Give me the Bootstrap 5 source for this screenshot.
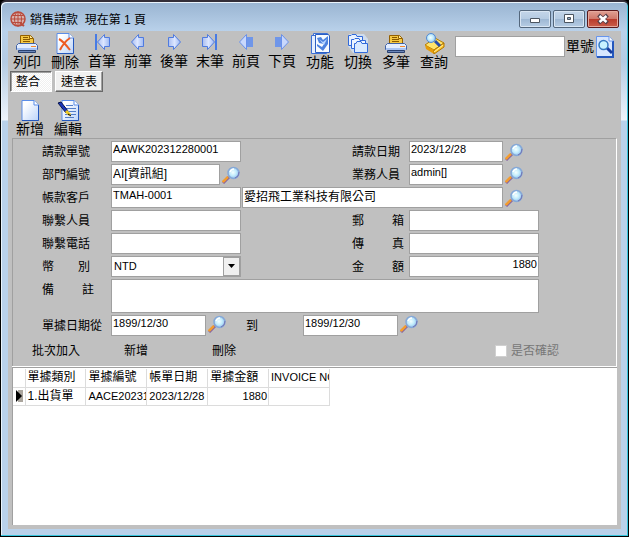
<!DOCTYPE html>
<html lang="zh-Hant">
<head>
<meta charset="utf-8">
<meta name="viewport" content="width=device-width, initial-scale=1">
<title>銷售請款</title>
<link href="https://cdn.jsdelivr.net/npm/bootstrap@5.3.0/dist/css/bootstrap.min.css" rel="stylesheet">
<style>
body{font-family:"Liberation Sans","Noto Sans CJK TC",sans-serif;font-size:12px;line-height:14px;color:#000;background:#000}
button{color:#000;line-height:14px}
.win{min-height:100vh;border:1px solid #000;border-top:2px solid #332e38;border-radius:6px 6px 0 0;padding:0 6px 7px;
 box-shadow:inset -1px -1px 0 #36c5dd,inset 1px 1px 0 #e9f3fb;
 background:linear-gradient(#99b4d1 0,#b9d1ea 29px,#b4cbe3 60px,#eef4fb 118px,#b9d1ea 119px)}
.titlebar{height:29px;padding:8px 3px 0 3px}
.titletext{line-height:16px;padding-left:4px;padding-top:2px;white-space:pre}
.capbtns{gap:2px}
.capbtn{width:32px;height:18px;border:1px solid #54677c;border-radius:2px;background:linear-gradient(#c4d6e9 0,#b5cbe2 48%,#9db7d3 50%,#b7cde4);box-shadow:inset 0 0 0 1px #d9e6f3}
.capclose{border-color:#5b1a1c;background:linear-gradient(#e0a093 0,#d0796b 48%,#b83a2a 50%,#ca5e4b);box-shadow:inset 0 0 0 1px #e5a99d}
.client{background:#c0c0c0;margin:0 1px;padding:0 4px 4px}
.tools{margin:0 -4px;height:40px}
.tool{display:flex;flex-direction:column;align-items:center;width:38px;font-size:14px;border:0;background:transparent;white-space:nowrap;padding:2px 0 0}
.nav-tool{width:36px}
.tool svg{width:22px;height:21px;margin-bottom:1px}
.nav-tool svg{height:18px;margin-bottom:3px}
.moretools{padding-left:1px}
.findbox{padding-top:5px;padding-right:7px}
.findbox label{font-size:14px;line-height:20px;padding:0 2px 0 1px}
.findfield{width:110px;flex:0 1 110px}
.field{border:1px solid #a0a0a0;background:#fff;height:21px;min-width:0;border-radius:0;padding:0 1px 5px;font-size:11px;line-height:14px;color:#000}
.cjk{font-size:12px}
.tabs{margin-left:-2px;gap:3px}
.tabbtn{height:21px;font-size:12px;padding:0 5px;background:#f0f0f0;border:1px solid;border-color:#fff #696969 #696969 #fff;box-shadow:inset -1px -1px 0 #a0a0a0}
.tabbtn.on{background:repeating-conic-gradient(#fff 0 25%,#f0f0f0 0 50%) 0 0/2px 2px;border-color:#696969 #fff #fff #696969;box-shadow:inset 1px 1px 0 #a0a0a0;padding-right:11px}
.edits{padding:6px 0 2px;margin-left:-1px}
.panel-form{border:1px solid;border-color:#a0a0a0 #fff #fff #a0a0a0;border-bottom:0;padding:2px 77px 0 29px}
.formgrid{display:grid;grid-template-columns:69px minmax(0,131fr) minmax(0,110fr) 57px minmax(0,130fr);row-gap:2px}
.lbl{align-self:center;line-height:19px;padding-top:2px;white-space:nowrap}
.label2{grid-column:4}
.spread{display:flex;justify-content:space-between;width:52px}
.spread.short{width:48px}
.left{grid-column:2;margin-right:1px}
.right{grid-column:5}
.wide{grid-column:3/6}
.whole{grid-column:2/-1}
.lens{border:0;background:transparent;padding:0 0 0 2px;width:36px;flex:none;text-align:left}
.lens svg{width:18px;height:18px;display:block}
.left .lens{width:21px}
.combo{appearance:none;padding:1px 20px 2px 2px}
.comboarrow{position:absolute;right:1px;top:1px;width:17px;height:19px;background:#f0f0f0;border:1px solid #a0a0a0;pointer-events:none}
.comboarrow svg{display:block;margin:6px 4px}
.memo{height:34px;resize:none;display:block}
.dates{display:grid;grid-template-columns:minmax(0,95fr) 97fr minmax(0,95fr) 141fr}
.acts{padding:8px 57px 8px 19px;border-left:1px solid #a0a0a0;border-right:1px solid #fff}
.linkbtn{border:0;background:transparent;padding:0;white-space:nowrap}
.actadd{margin-left:44px}
.actdel{margin-left:64px}
.confirm{color:#777}
.confirm input{appearance:none;width:12px;height:12px;background:#fff;border:1px solid #d0d0d0;margin:0}
.sheet{border-top:1px solid #fff;background:#fff;box-shadow:inset 0 1px 0 #a0a0a0,inset 1px 0 0 #a0a0a0;padding:2px 0 0 1px}
.gridtable{width:317px;table-layout:fixed;border-collapse:collapse;margin:0}
.gridtable th,.gridtable td{height:18px;padding:0 1px 0 2px;font-weight:400;line-height:17px;white-space:nowrap;overflow:hidden;border-right:1px solid #dcdcdc;border-bottom:1px solid #dcdcdc}
.gridtable .lat{font-size:11px}
.gridtable .cur{padding:0 0 0 2px}
.gridtable svg{display:block}
</style>
<script src="https://cdn.jsdelivr.net/npm/bootstrap@5.3.0/dist/js/bootstrap.bundle.min.js"></script>
</head>
<body>
<svg width="0" height="0" class="position-absolute" aria-hidden="true">
<defs>
<linearGradient id="paper" x2="1" y2="1"><stop offset=".2" stop-color="#fff"/><stop offset="1" stop-color="#bcd4fa"/></linearGradient>
<linearGradient id="arrow" x2="1"><stop stop-color="#a9bdf0"/><stop offset=".5" stop-color="#dce6ff"/><stop offset="1" stop-color="#9db8f2"/></linearGradient>
<radialGradient id="glass" cx=".45" cy=".45"><stop stop-color="#f4ffff"/><stop offset=".6" stop-color="#c2ecfc"/><stop offset="1" stop-color="#9cc8f0"/></radialGradient>
<symbol id="printer" viewBox="0 0 22 21"><path d="M4.500 11V2.500H14.500L17.500 5.500V11Z" fill="#f5c843" stroke="#946000"/><path d="M7 4.500H12M7 6.500H14M7 8.500H14" stroke="#8a5a00"/><path d="M13.500 2.500V5.500H17" fill="#fff0ae" stroke="#946000"/><path d="M2.500 10.500H19.500L21.500 12.500V16.500H.5V12.500Z" fill="#e3edff" stroke="#4263a6"/><path d="M1 15H21V17H1Z" fill="#a9c4f4"/><path d="M15 13.500H20" stroke="#f3892d"/><path d="M2.500 17.500H19.500V19.500H2.500Z" fill="#6b87ba" stroke="#294170"/></symbol>
<symbol id="sheet" viewBox="0 0 18 21"><path d="M1 .5H13L17.500 5V20.500H1Z" fill="url(#paper)" stroke="#5b8de8"/><path d="M17.500 5V20.500H1" fill="none" stroke="#2457bd"/><path d="M13 .5V5H17.500" fill="#fff" stroke="#5b8de8"/></symbol>
<symbol id="delete" viewBox="0 0 22 21"><use href="#sheet" x="2" width="18" height="21"/><path d="M5 6Q9 8 16 17M16 5Q10 9 6 17" fill="none" stroke="#ed5b22" stroke-width="2"/></symbol>
<symbol id="prev" viewBox="0 0 22 18"><path d="M4.500 9 11.500 1.500V4.500H16.500V13.500H11.500V16.500Z" fill="url(#arrow)" stroke="#4f7be0"/></symbol>
<symbol id="next" viewBox="0 0 22 18"><path d="M17.500 9 10.500 1.500V4.500H5.500V13.500H10.500V16.500Z" fill="url(#arrow)" stroke="#4f7be0"/></symbol>
<symbol id="first" viewBox="0 0 22 18"><path d="M6.500 9 13.500 1.500V4.500H18.500V13.500H13.500V16.500Z" fill="url(#arrow)" stroke="#4f7be0"/><path d="M5 1V17" stroke="#477be5" stroke-width="2"/></symbol>
<symbol id="last" viewBox="0 0 22 18"><path d="M15.500 9 8.500 1.500V4.500H3.500V13.500H8.500V16.500Z" fill="url(#arrow)" stroke="#4f7be0"/><path d="M17 1V17" stroke="#477be5" stroke-width="2"/></symbol>
<symbol id="pgup" viewBox="0 0 22 18"><path d="M4.500 9 11.500 1.500V16.500Z" fill="#c9d8fc" stroke="#6b91e9"/><path d="M12 4H18V14H12Z" fill="#6f96e9"/></symbol>
<symbol id="pgdn" viewBox="0 0 22 18"><path d="M17.500 9 10.500 1.500V16.500Z" fill="#c9d8fc" stroke="#6b91e9"/><path d="M4 4H10V14H4Z" fill="#6f96e9"/></symbol>
<symbol id="func" viewBox="0 0 22 21"><path d="M4.500 .5H18.500V18.500H4.500Z" fill="#fff" stroke="#3c70d5"/><path d="M2.500 2.500H17.500V20.500H2.500Z" fill="#e5efff" stroke="#3c70d5"/><path d="M6.500 1.500H19.500L20.500 3V19.500H6.500Z" fill="#f7fbff" stroke="#2c5fc2"/><path d="M8 5 12 4 14 7 19 3V11L14 18 8 13V11L13 14 15 11 10 10Z" fill="#4d83df"/><path d="M10 6 14 9 18 6 15 12Z" fill="#b8d6ff"/></symbol>
<symbol id="switch" viewBox="0 0 22 21"><path d="M2 1H17L21 6V20H6L1 13Z" fill="#cfdcec"/><path d="M1.500 2.500H4L5 1.500H9L10 3.500H15.500V12.500H1.500Z" fill="#e8f1ff" stroke="#316adb"/><path d="M4.500 6.500H7L8 5.500H12L13 7.500H18.500V15.500H4.500Z" fill="#edf5ff" stroke="#316adb"/><path d="M7.500 10.500H9L10 8.500H14L15 10.500H20.500V19.500H7.500Z" fill="#d9eaff" stroke="#316adb"/></symbol>
<symbol id="query" viewBox="0 0 22 21"><path d="M2 12 12 5 21 10 11 17Z" fill="#ffe36a" stroke="#b37b00"/><path d="M2 12 11 17V21L3 16Z" fill="#e69c08"/><path d="M11 17 21 10V14L11 21Z" fill="#ffc527" stroke="#b07500"/><path d="M11 19 20 12" stroke="#fff0a0"/><path d="M12 8 17 13" stroke="#284eab" stroke-width="3"/><circle cx="8" cy="5" r="4.500" fill="url(#glass)" stroke="#518bd6"/></symbol>
<symbol id="edit" viewBox="0 0 22 21"><use href="#sheet" x="4" width="18" height="21"/><path d="M9 5.500H16M8 8.500H19M11 11.500H19M8 14.500H19M8 17.500H17" stroke="#547fc9"/><path d="M1 3 4 2 11 11 9 13Z" fill="#1936bd" stroke="#071449"/><path d="M9 11 13 15" stroke="#ecc721" stroke-width="3"/><path d="M11 14 14 16" stroke="#000"/></symbol>
<symbol id="find" viewBox="0 0 18 22"><path d="M.5 .5H13L17.500 5V21H.5Z" fill="#d7e7ff" stroke="#6795ed"/><path d="M17 5V21H1" fill="none" stroke="#2457bd" stroke-width="2"/><path d="M13 .5V5H17" fill="#fff" stroke="#6795ed"/><path d="M11 12 16 17" stroke="#173d9f" stroke-width="3"/><circle cx="7.500" cy="9" r="4.500" fill="#c7f2ff" stroke="#3678bf" stroke-width="1.500"/></symbol>
<symbol id="lens" viewBox="0 0 18 18"><path d="M1 17 7 11" stroke="#8563a2" stroke-width="3"/><path d="M.8 16 6 10.800" stroke="#f39c2e" stroke-width="2.500"/><circle cx="11.500" cy="7" r="5.500" fill="url(#glass)" stroke="#85a8d7" stroke-width="1.500"/><path d="M13 12Q17 11 17 6" fill="none" stroke="#7475b5"/><path d="M8 6Q9 3 12 3" fill="none" stroke="#fff" stroke-width="1.500"/></symbol>
</defs></svg>

<div class="win d-flex flex-column">
 <header class="titlebar d-flex align-items-start">
  <svg width="16" height="18" viewBox="0 0 16 18" fill="none" stroke="#b94a3c" aria-hidden="true"><circle cx="8" cy="9" r="7" fill="#d9b3b0" stroke-width="1.500"/><ellipse cx="8" cy="9" rx="3.500" ry="7"/><path d="M8 2V16M1 9H15M2.500 5.500H13.500M2.500 12.500H12"/><path d="M10 13 14 16" stroke-width="2"/></svg>
  <div class="titletext me-auto">銷售請款  現在第 1 頁</div>
  <div class="capbtns d-flex">
   <button type="button" class="capbtn p-0 d-flex align-items-center justify-content-center" aria-label="最小化"><svg width="12" height="12"><path d="M1.500 5.500H10.500V9.500H1.500Z" fill="#fff" stroke="#4b5560"/></svg></button>
   <button type="button" class="capbtn p-0 d-flex align-items-center justify-content-center" aria-label="還原"><svg width="12" height="12"><path d="M1.500 1.500H10.500V9.500H1.500Z" fill="#fff" stroke="#4b5560"/><path d="M4.500 4.500H7.500V6.500H4.500Z" fill="#91abc5" stroke="#4b5560"/></svg></button>
   <button type="button" class="capbtn capclose p-0 d-flex align-items-center justify-content-center" aria-label="關閉"><svg width="12" height="12"><path d="M1.500 2 10.500 10M10.500 2 1.500 10" stroke="#57404a" stroke-width="4"/><path d="M2.500 3 9.500 9M9.500 3 2.500 9" stroke="#fff" stroke-width="2.500"/></svg></button>
  </div>
 </header>

 <main class="client flex-grow-1 d-flex flex-column">
  <div class="tools d-flex align-items-start">
   <button type="button" class="tool"><svg><use href="#printer"/></svg>列印</button>
   <button type="button" class="tool"><svg><use href="#delete"/></svg>刪除</button>
   <button type="button" class="tool nav-tool"><svg><use href="#first"/></svg>首筆</button>
   <button type="button" class="tool nav-tool"><svg><use href="#prev"/></svg>前筆</button>
   <button type="button" class="tool nav-tool"><svg><use href="#next"/></svg>後筆</button>
   <button type="button" class="tool nav-tool"><svg><use href="#last"/></svg>末筆</button>
   <button type="button" class="tool nav-tool"><svg><use href="#pgup"/></svg>前頁</button>
   <button type="button" class="tool nav-tool"><svg><use href="#pgdn"/></svg>下頁</button>
   <div class="moretools d-flex">
    <button type="button" class="tool"><svg><use href="#func"/></svg>功能</button>
    <button type="button" class="tool"><svg><use href="#switch"/></svg>切換</button>
    <button type="button" class="tool"><svg><use href="#printer"/></svg>多筆</button>
    <button type="button" class="tool"><svg><use href="#query"/></svg>查詢</button>
   </div>
   <div class="findbox d-flex flex-grow-1 justify-content-end">
    <input class="field findfield" id="docno" type="text" size="1">
    <label for="docno" class="text-nowrap">單號</label>
    <button type="button" class="linkbtn" aria-label="搜尋"><svg width="18" height="22" class="d-block"><use href="#find"/></svg></button>
   </div>
  </div>
  <div class="tabs d-flex">
   <button type="button" class="tabbtn on">整合</button>
   <button type="button" class="tabbtn">速查表</button>
  </div>
  <div class="edits d-flex">
   <button type="button" class="tool"><svg><use href="#sheet"/></svg>新增</button>
   <button type="button" class="tool"><svg><use href="#edit"/></svg>編輯</button>
  </div>

  <form>
   <div class="panel-form">
    <div class="formgrid">
     <label class="lbl" for="f1">請款單號</label>
     <input id="f1" class="field left" value="AAWK202312280001">
     <label class="lbl label2" for="f2">請款日期</label>
     <div class="right d-flex"><input id="f2" class="field flex-fill" size="1" value="2023/12/28"><button type="button" class="lens" aria-label="選擇日期"><svg><use href="#lens"/></svg></button></div>

     <label class="lbl" for="f3">部門編號</label>
     <div class="left d-flex"><input id="f3" class="field cjk flex-fill" size="1" value="AI[資訊組]"><button type="button" class="lens" aria-label="選擇部門"><svg><use href="#lens"/></svg></button></div>
     <label class="lbl label2" for="f4">業務人員</label>
     <div class="right d-flex"><input id="f4" class="field flex-fill" size="1" value="admin[]"><button type="button" class="lens" aria-label="選擇人員"><svg><use href="#lens"/></svg></button></div>

     <label class="lbl" for="f5">帳款客戶</label>
     <input id="f5" class="field left" value="TMAH-0001">
     <div class="wide d-flex"><input class="field cjk flex-fill" aria-label="客戶名稱" size="1" value="愛招飛工業科技有限公司"><button type="button" class="lens" aria-label="選擇客戶"><svg><use href="#lens"/></svg></button></div>

     <label class="lbl" for="f6">聯繫人員</label>
     <input id="f6" class="field left">
     <label class="lbl label2 spread" for="f7"><span>郵</span><span>箱</span></label>
     <input id="f7" class="field right">

     <label class="lbl" for="f8">聯繫電話</label>
     <input id="f8" class="field left">
     <label class="lbl label2 spread" for="f9"><span>傳</span><span>真</span></label>
     <input id="f9" class="field right">

     <label class="lbl spread short" for="f10"><span>幣</span><span>別</span></label>
     <div class="left position-relative"><select id="f10" class="field combo w-100 d-block"><option>NTD</option></select><span class="comboarrow"><svg width="7" height="4"><path d="M0 0H7L3.500 4Z"/></svg></span></div>
     <label class="lbl label2 spread" for="f11"><span>金</span><span>額</span></label>
     <input id="f11" class="field right text-end" value="1880">

     <label class="lbl spread align-self-start" for="f12"><span>備</span><span>註</span></label>
     <textarea id="f12" class="field memo whole"></textarea>

     <label class="lbl" for="f13">單據日期從</label>
     <div class="whole dates">
      <input id="f13" class="field" value="1899/12/30">
      <div class="d-flex align-items-start"><button type="button" class="lens" aria-label="選擇起始日期"><svg><use href="#lens"/></svg></button><label class="lbl ms-1" for="f14">到</label></div>
      <input id="f14" class="field" value="1899/12/30">
      <div><button type="button" class="lens" aria-label="選擇結束日期"><svg><use href="#lens"/></svg></button></div>
     </div>
    </div>
   </div>
   <div class="acts d-flex align-items-center">
    <button type="button" class="linkbtn">批次加入</button>
    <button type="button" class="linkbtn actadd">新增</button>
    <button type="button" class="linkbtn actdel">刪除</button>
    <label class="confirm d-flex align-items-center gap-1 ms-auto"><input type="checkbox" disabled>是否確認</label>
   </div>
  </form>

  <div class="sheet flex-grow-1">
   <table class="gridtable">
    <colgroup><col style="width:12px"><col><col><col><col><col></colgroup>
    <thead><tr><th></th><th>單據類別</th><th>單據編號</th><th>帳單日期</th><th>單據金額</th><th class="lat">INVOICE NO</th></tr></thead>
    <tbody><tr><td class="cur"><svg width="8" height="12"><path d="M3 0H8V12H3Z" fill="#aaa59d"/><path d="M1 0 7 6 1 12Z"/></svg></td><td>1.出貨單</td><td class="lat">AACE20231</td><td class="lat">2023/12/28</td><td class="lat text-end">1880</td><td></td></tr></tbody>
   </table>
  </div>
 </main>
</div>
</body>
</html>
